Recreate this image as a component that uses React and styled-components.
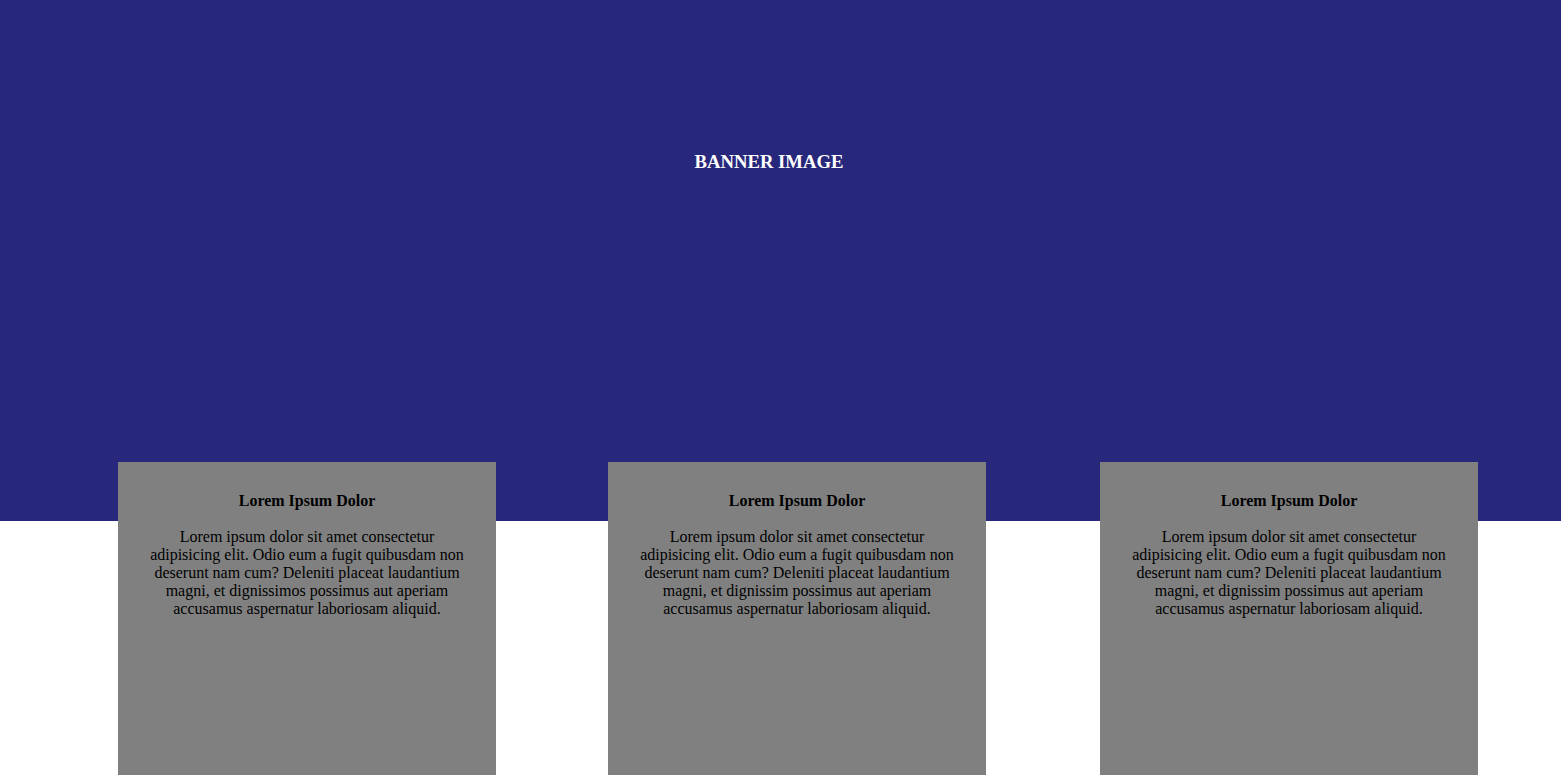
import styled, { createGlobalStyle } from "styled-components";

const cards = [
  "Lorem ipsum dolor sit amet consectetur adipisicing elit. Odio eum a fugit quibusdam non deserunt nam cum? Deleniti placeat laudantium magni, et dignissimos possimus aut aperiam accusamus aspernatur laboriosam aliquid.",
  "Lorem ipsum dolor sit amet consectetur adipisicing elit. Odio eum a fugit quibusdam non deserunt nam cum? Deleniti placeat laudantium magni, et dignissim possimus aut aperiam accusamus aspernatur laboriosam aliquid.",
  "Lorem ipsum dolor sit amet consectetur adipisicing elit. Odio eum a fugit quibusdam non deserunt nam cum? Deleniti placeat laudantium magni, et dignissim possimus aut aperiam accusamus aspernatur laboriosam aliquid.",
];

export default function App() {
  return (
    <>
      <GlobalStyle />
      <Banner>
        <BannerTitle>BANNER IMAGE</BannerTitle>
      </Banner>
      <CardRow>
        {cards.map((text, index) => (
          <Card key={index} last={index === cards.length - 1}>
            <CardTitle>Lorem Ipsum Dolor</CardTitle>
            <CardText>{text}</CardText>
          </Card>
        ))}
      </CardRow>
    </>
  );
}

// --------------------------css

const GlobalStyle = createGlobalStyle`
  html, body {
    margin: 0;
    padding: 0;
    background: #ffffff;
    font-family: "Liberation Serif", "Times New Roman", serif;
    overflow: hidden;
  }
`;

const Banner = styled.div`
  width: 100%;
  height: 521px;
  box-sizing: border-box;
  padding: 151px 23px 0 0;
  background-color: #27277b;
  text-align: center;
`;

const BannerTitle = styled.h3`
  margin: 0;
  font-size: 18.72px;
  font-weight: bold;
  color: #ffffff;
`;

const CardRow = styled.div`
  display: flex;
  gap: 112px;
  padding-left: 118px;
  margin-top: -59px;
`;

const Card = styled.div.withConfig({
  shouldForwardProp: (prop) => prop !== "last",
})`
  width: 378px;
  height: 330px;
  box-sizing: border-box;
  padding: 30px 32px 0;
  margin-left: ${(props) => (props.last ? "2px" : "0")};
  background-color: #808080;
  text-align: center;
  color: #000000;
`;

const CardTitle = styled.h4`
  margin: 0 0 18px;
  font-size: 16px;
  line-height: 18px;
  font-weight: bold;
`;

const CardText = styled.p`
  margin: 0;
  font-size: 16px;
  line-height: 18px;
`;
